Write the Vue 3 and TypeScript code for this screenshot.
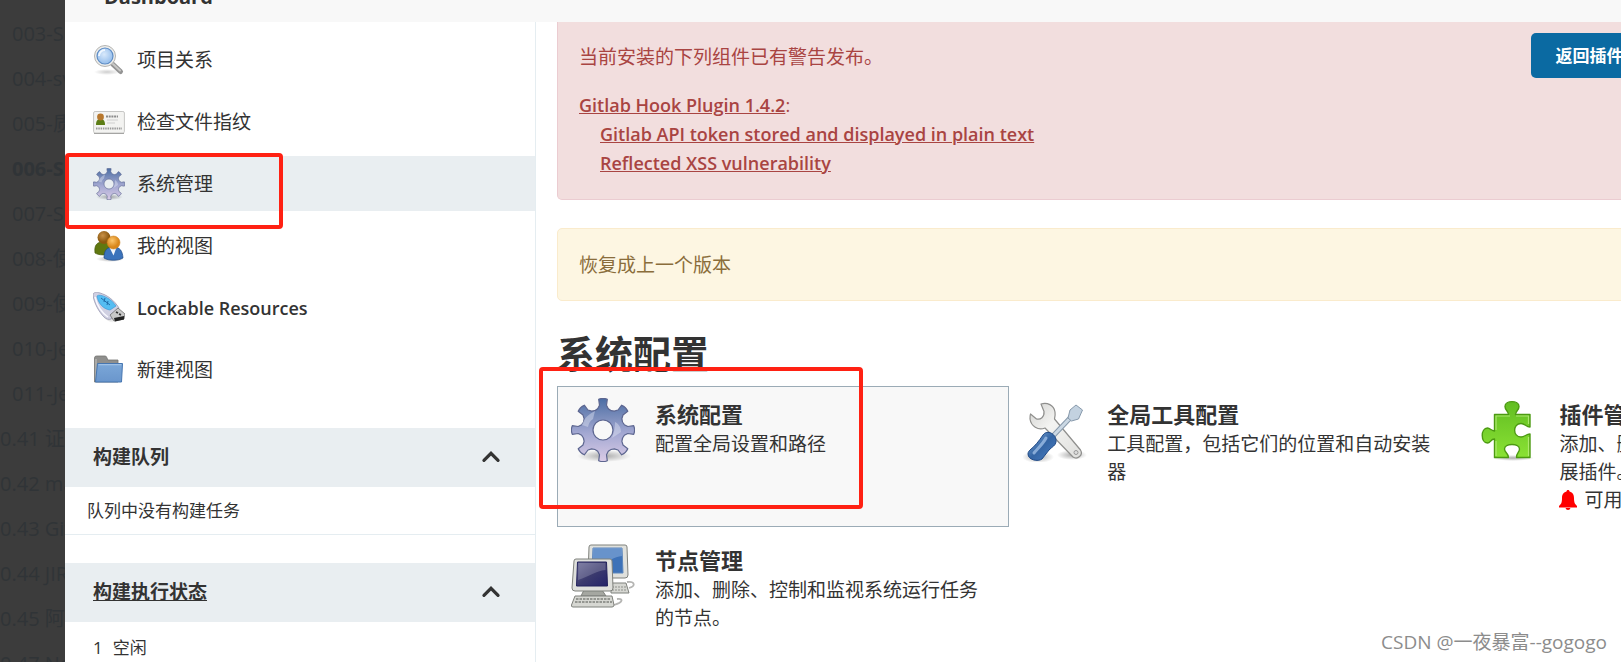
<script setup lang="ts">
interface NavItem {
  label: string
  icon: string
  latin?: boolean
  active?: boolean
}

interface Tool {
  title: string
  text: string
  icon: string
  active?: boolean
  notice?: string
}

const outline: { label: string; section?: boolean; current?: boolean }[] = [
  { label: '003-S' },
  { label: '004-sv' },
  { label: '005-质' },
  { label: '006-S', current: true },
  { label: '007-S' },
  { label: '008-使' },
  { label: '009-使' },
  { label: '010-Je' },
  { label: '011-Je' },
  { label: '0.41 证', section: true },
  { label: '0.42 ma', section: true },
  { label: '0.43 Git', section: true },
  { label: '0.44 JIR', section: true },
  { label: '0.45 阿', section: true },
  { label: '0.47 Ne', section: true },
]

const nav: NavItem[] = [
  { label: '项目关系', icon: 'search' },
  { label: '检查文件指纹', icon: 'card' },
  { label: '系统管理', icon: 'gear', active: true },
  { label: '我的视图', icon: 'people' },
  { label: 'Lockable Resources', icon: 'usb', latin: true },
  { label: '新建视图', icon: 'folder' },
]

const tools: Tool[] = [
  { title: '系统配置', text: '配置全局设置和路径', icon: 'gear', active: true },
  { title: '全局工具配置', text: '工具配置，包括它们的位置和自动安装器', icon: 'tools' },
  { title: '插件管理', text: '添加、删除、禁用或启用Jenkins功能扩展插件。', icon: 'puzzle', notice: '可用更新' },
  { title: '节点管理', text: '添加、删除、控制和监视系统运行任务的节点。', icon: 'computers' },
]

// Outline of an eight-toothed cog centred in a 64-unit box.
function cog(): string {
  const at = (radius: number, degrees: number) => {
    const a = (degrees * Math.PI) / 180
    return `${(32 + radius * Math.cos(a)).toFixed(1)} ${(32 + radius * Math.sin(a)).toFixed(1)}`
  }
  let d = ''
  for (let i = 0; i < 8; i++) {
    const c = i * 45
    d += `${i ? 'L' : 'M'}${at(22, c - 14)}L${at(25, c - 8)}L${at(31, c - 8)}Q${at(32.5, c)} ${at(31, c + 8)}L${at(25, c + 8)}L${at(22, c + 14)}Q${at(20.5, c + 22.5)} ${at(22, c + 31)}`
  }
  return d + 'Z'
}
const cogPath = cog()
</script>

<template>
  <svg class="defs" aria-hidden="true">
    <defs>
      <linearGradient id="g-cog" x1="0" y1="0" x2="0" y2="1">
        <stop offset="0" stop-color="#4a6da4" /><stop offset=".3" stop-color="#7b8dbb" />
        <stop offset=".55" stop-color="#a3a8d2" /><stop offset="1" stop-color="#dacbe6" />
      </linearGradient>
      <linearGradient id="g-green" x1="0" y1="0" x2="0" y2="1">
        <stop offset="0" stop-color="#62bd22" /><stop offset="1" stop-color="#8ae234" />
      </linearGradient>
      <linearGradient id="g-metal" x1="0" y1="0" x2="1" y2="1">
        <stop offset="0" stop-color="#d2d2d0" /><stop offset=".4" stop-color="#f4f4f2" /><stop offset="1" stop-color="#dededc" />
      </linearGradient>
      <linearGradient id="g-blue" x1="0" y1="0" x2="1" y2="1">
        <stop offset="0" stop-color="#86aedb" /><stop offset=".5" stop-color="#3465a4" /><stop offset="1" stop-color="#4a7fc4" />
      </linearGradient>
      <linearGradient id="g-screen" x1="0" y1="0" x2="1" y2="1">
        <stop offset="0" stop-color="#6f6f9a" /><stop offset=".5" stop-color="#3c3b6e" /><stop offset="1" stop-color="#25246a" />
      </linearGradient>
      <linearGradient id="g-folder" x1="0" y1="0" x2="0" y2="1">
        <stop offset="0" stop-color="#7ba7d8" /><stop offset="1" stop-color="#6a96cc" />
      </linearGradient>
      <radialGradient id="g-shadow">
        <stop offset="0" stop-color="#000" stop-opacity=".32" /><stop offset="1" stop-color="#000" stop-opacity="0" />
      </radialGradient>
      <radialGradient id="g-lens" cx=".45" cy=".4">
        <stop offset="0" stop-color="#d9e9fb" /><stop offset="1" stop-color="#9fc4ee" />
      </radialGradient>
      <radialGradient id="g-amber" cx=".4" cy=".35">
        <stop offset="0" stop-color="#fcc66c" /><stop offset="1" stop-color="#d9871b" />
      </radialGradient>
      <radialGradient id="g-brown" cx=".4" cy=".35">
        <stop offset="0" stop-color="#c99147" /><stop offset="1" stop-color="#8c5910" />
      </radialGradient>
    </defs>

    <symbol id="i-gear" viewBox="0 0 64 64">
      <ellipse cx="33" cy="58" rx="27" ry="6" fill="url(#g-shadow)" />
      <path fill-rule="evenodd" :d="cogPath + 'M42 32a10 10 0 1 0-20 0a10 10 0 1 0 20 0Z'" fill="url(#g-cog)" stroke="#5d6690" stroke-width="1.2" stroke-linejoin="round" />
      <path d="M11 27c2-7 7-11 13-14l-2 8c-3 2-4 4-5 8zM44 24c4 2 6 6 6 10l-9 6c2-5 3-10 3-16z" fill="#dde2f2" opacity=".45" />
    </symbol>

    <symbol id="i-search" viewBox="0 0 32 32">
      <ellipse cx="14" cy="28" rx="13" ry="3" fill="url(#g-shadow)" opacity=".6" />
      <path d="M19.5 20l8 7.500" stroke="#949494" stroke-width="5" stroke-linecap="round" />
      <path d="M20 20l7 6.500" stroke="#c8c8c6" stroke-width="2" stroke-linecap="round" />
      <circle cx="12" cy="12" r="10.500" fill="#ededeb" stroke="#b5b5b3" />
      <circle cx="12" cy="12" r="8" fill="url(#g-lens)" stroke="#5d8cc5" stroke-width="1.2" />
      <path d="M6 12a6 6 0 0 1 6-6" stroke="#eef6ff" stroke-width="2" fill="none" />
    </symbol>

    <symbol id="i-card" viewBox="0 0 32 32">
      <rect x=".6" y="5.500" width="30.800" height="21.500" rx="1.500" fill="#f3f3f1" stroke="#c6c6c4" />
      <path d="M1 27.500h30" stroke="#a5a5a3" />
      <path d="M3 19c0-5 2-6 4.500-6s4.500 1 4.500 6z" fill="#5c7d16" />
      <circle cx="7.500" cy="11" r="3.400" fill="#b8782e" />
      <path d="M13 10.500h12" stroke="#8c8c8c" stroke-width="1.800" stroke-dasharray="2 .7" />
      <path d="M14 14h11M14 17h8" stroke="#cfcfcf" stroke-width="1.200" />
      <path d="M3 22.500h26" stroke="#9b9b9b" stroke-width="2" stroke-dasharray="1.500 .8" />
    </symbol>

    <symbol id="i-people" viewBox="0 0 32 32">
      <ellipse cx="17" cy="29" rx="14" ry="3" fill="url(#g-shadow)" />
      <path d="M2 23c-1-8 2-11 8-11s8 3 8 11c-4 2.500-12 2.500-16 0z" fill="#607810" stroke="#45590a" stroke-width=".7" />
      <circle cx="11" cy="7.500" r="6.500" fill="url(#g-brown)" />
      <path d="M11 28c0-8 3-11 9.500-11s9 4 9.500 11c-5 3-14 3-19 0z" fill="#3b73bb" stroke="#204a87" stroke-width=".7" />
      <path d="M16.500 17.500h7l-3 8z" fill="#f4f7fb" />
      <circle cx="20.500" cy="12.500" r="6.500" fill="url(#g-amber)" stroke="#c77a14" stroke-width=".5" />
    </symbol>

    <symbol id="i-usb" viewBox="0 0 32 32">
      <path d="M8 22c4 6 9 9 16 9l4-3-6-6z" fill="url(#g-shadow)" opacity=".6" />
      <path d="M0 3c0-3 4-3 7-2 7 2 14 7 19 15l-8 11c-2 1-5 0-7-2C6 20 1 11 0 3z" fill="#d0d0e2" stroke="#a0a0b8" stroke-width=".9" />
      <path d="M2 5c2 8 7 16 13 20" fill="none" stroke="#f8f8ff" stroke-width="1.500" />
      <path d="M4 4c3-3 15 3 19 10l-6 4C10 17 5 11 4 4z" fill="#55bdf2" stroke="#3a9bd8" stroke-width=".7" />
      <path d="M8 6l9 7M12 6l-1 4M15 9l-1 4" stroke="#1f6ca8" />
      <path d="M17 23l8-7 7 6-1 5-10 2z" fill="#c9c9c9" stroke="#6e6e6e" stroke-width=".8" />
      <path d="M21 26l10-2v3.500l-9 2z" fill="#222" />
      <path d="M23 20l2 1M26 22l2 .8" stroke="#333" stroke-width="1.800" />
    </symbol>

    <symbol id="i-folder" viewBox="0 0 32 32">
      <path d="M1.500 28V4q0-2 2-2H12q1.500 0 2 2l.8 2H25v22z" fill="#8f8f8d" stroke="#747472" stroke-width=".8" />
      <path d="M3 26V5" stroke="#bcbcba" stroke-width="1.200" />
      <path d="M4.500 9.500h25l-1 18.500H2.500z" fill="url(#g-folder)" stroke="#4676b1" stroke-linejoin="round" />
      <path d="M5.500 10.700h22.800" stroke="#a8c7e8" />
    </symbol>

    <symbol id="i-tools" viewBox="0 0 64 64">
      <ellipse cx="15" cy="59" rx="16" ry="6" fill="url(#g-shadow)" />
      <ellipse cx="49" cy="57" rx="15" ry="5" fill="url(#g-shadow)" />
      <path d="M18 6c6-2 13 1 14 8 .5 3 0 5-.5 7l26 31c3 5-3 10-7.500 7L22 30C15 33 8 28 7 21c0-2 0-4 .5-5l6 5c4 1 8-2 7.500-7.500z" fill="url(#g-metal)" stroke="#8f8f8d" stroke-width="1.200" stroke-linejoin="round" />
      <circle cx="53" cy="54.500" r="2" fill="#ddd" stroke="#999" />
      <path d="M30 38L49 18" stroke="#8799ab" stroke-width="5" />
      <path d="M30 38L49 18" stroke="#cbd8e4" stroke-width="3" />
      <path d="M45 20l2-8 6-5 6.500 5-4 9-7 2z" fill="#c3d2e0" stroke="#8799ab" stroke-linejoin="round" />
      <path d="M20 37c4-6 14-1 13 7-1 4-3 4-7 8l-7 9c-4 3-14 1-14-5 0-2 1-3 2-4 5-4 9-9 13-15z" fill="url(#g-blue)" stroke="#204a87" />
      <path d="M23 40c-3 6-8 10-12 15" stroke="#a9c8ec" stroke-width="3" stroke-linecap="round" fill="none" opacity=".7" />
    </symbol>

    <symbol id="i-puzzle" viewBox="0 0 64 64">
      <ellipse cx="38" cy="60" rx="21" ry="3" fill="url(#g-shadow)" />
      <path d="M19.500 16.500H33.500c0-3.500-3.500-4-3.500-8 0-6.500 14-6.500 14 0 0 4-3.500 4.500-3.500 8H55V29c-4 0-5-3.500-9-3.500-8.500 0-8.500 13.500 0 13.500 4 0 5-3 9-3V59.500H41.500c0-5 3-5 3-8.500 0-6-15-6-15 0 0 3.500 4 4 4 8.500H19.500V41c-4 0-4 4-7 4-7 0-7-15 0-15 3 0 3 3 7 3z" fill="url(#g-green)" stroke="#4c9a12" stroke-width="1.400" stroke-linejoin="round" />
      <path d="M21 32V18h14M53.500 26v-8H41M21 58V43M53.500 39v19" fill="none" stroke="#b9ee7f" stroke-width="1.200" opacity=".8" />
    </symbol>

    <symbol id="i-computers" viewBox="0 0 64 64">
      <path d="M56 38c8-1 9 4 2 6M46 55c6-1 7 3-3 6" fill="none" stroke="#b5b5b3" stroke-width="1.800" />
      <path d="M40 39h15l3 10H40z" fill="#d6d7d2" stroke="#7f817c" />
      <path d="M41 43h14M41 46h15" stroke="#8f918c" stroke-dasharray="2 1" />
      <path d="M20 1h34q2 0 2 2l1 28q0 3-3 3H19q-2 0-2-2L18 3q0-2 2-2z" fill="#dfe0dc" stroke="#7f817c" />
      <path d="M22 4h29l1 25H21z" fill="#3d72b8" stroke="#5d87bd" />
      <path d="M22 4h29v8c-8 1-14 5-20 10l-9 1z" fill="#80a5d6" opacity=".65" />
      <path d="M13 46h18l4 6H10z" fill="#a5a7a1" stroke="#7f817c" />
      <path d="M5 15h34q2 0 2 2l1 27q0 3-3 3H4q-3 0-3-3l2-27q0-2 2-2z" fill="#dfe0dc" stroke="#7f817c" />
      <path d="M6.500 18h29l1 24h-31z" fill="url(#g-screen)" stroke="#23225c" />
      <path d="M7.500 19h27v7C25 27 17 33 7 36z" fill="#a3a3bd" opacity=".35" />
      <path d="M4 52h37l2 9q0 2-2 2H2q-2 0-1.500-2z" fill="#d6d7d2" stroke="#7f817c" />
      <path d="M5 55h35M4 58h37" stroke="#7f817c" stroke-width="1.300" stroke-dasharray="2.500 1" />
    </symbol>
  </svg>

  <div class="page">
    <div class="outline">
      <div v-for="o in outline" :key="o.label" class="outline-row" :class="{ section: o.section, current: o.current }">{{ o.label }}</div>
    </div>

    <div class="window">
      <header class="topbar"><a href="#" class="crumb">Dashboard</a></header>

      <div class="body">
        <aside class="side">
          <nav class="nav">
            <a v-for="n in nav" :key="n.label" href="#" class="nav-item" :class="{ active: n.active, latin: n.latin }">
              <svg class="icon-sm"><use :href="'#i-' + n.icon" /></svg>
              <span>{{ n.label }}</span>
              <i v-if="n.active" class="mark mark-nav"></i>
            </a>
          </nav>

          <section class="pane">
            <div class="pane-head">
              <span>构建队列</span>
              <button type="button" class="toggle" aria-label="收起构建队列">
                <svg viewBox="0 0 18 12"><path d="M2.500 9.500L9 3l6.500 6.500" /></svg>
              </button>
            </div>
            <p class="pane-row queue">队列中没有构建任务</p>
          </section>

          <section class="pane">
            <div class="pane-head">
              <a href="#">构建执行状态</a>
              <button type="button" class="toggle" aria-label="收起构建执行状态">
                <svg viewBox="0 0 18 12"><path d="M2.500 9.500L9 3l6.500 6.500" /></svg>
              </button>
            </div>
            <p class="pane-row executor"><span>1</span><span>空闲</span></p>
          </section>
        </aside>

        <main class="main">
          <div class="content">
            <section class="alert danger">
              <div class="alert-text">
                <p>当前安装的下列组件已有警告发布。</p>
                <dl>
                  <dt><a href="#">Gitlab Hook Plugin 1.4.2</a>:</dt>
                  <dd><a href="#">Gitlab API token stored and displayed in plain text</a></dd>
                  <dd><a href="#">Reflected XSS vulnerability</a></dd>
                </dl>
              </div>
              <div class="actions"><button type="button" class="primary">返回插件管理</button></div>
            </section>

            <section class="alert warning">恢复成上一个版本</section>

            <h1>系统配置</h1>
            <div class="cards">
              <a v-for="t in tools" :key="t.title" href="#" class="card" :class="{ active: t.active }">
                <svg class="icon-lg"><use :href="'#i-' + t.icon" /></svg>
                <span class="card-text">
                  <strong>{{ t.title }}</strong>
                  <span>{{ t.text }}</span>
                  <span v-if="t.notice" class="notice">
                    <svg viewBox="0 0 18 20"><path d="M9 0c1 0 1.500.7 1.500 1.500C14 2.500 15 5 15 8c0 5 1 6 3 8v1.500H0V16c2-2 3-3 3-8 0-3 1-5.500 4.500-6.500C7.500.700 8 0 9 0zM6.500 18h5q-.5 2-2.500 2t-2.500-2z" /></svg>{{ t.notice }}
                  </span>
                </span>
                <i v-if="t.active" class="mark mark-card"></i>
              </a>
            </div>
          </div>
        </main>
      </div>
    </div>

    <div class="watermark">CSDN @一夜暴富--gogogo</div>
  </div>
</template>

<style>
body {
  margin: 0;
  overflow: hidden;
}
</style>

<style scoped>
* {
  box-sizing: border-box;
}
.defs {
  position: absolute;
  width: 0;
  height: 0;
}
.page {
  position: relative;
  display: flex;
  height: 100vh;
  overflow: hidden;
  background: #3c3c3c;
  color: #333;
  font-family: "Open Sans", "Noto Sans CJK SC", sans-serif;
  font-size: 19px;
  line-height: 28px;
}
a {
  color: inherit;
}
p,
dl,
dd,
h1 {
  margin: 0;
}
.outline {
  flex: none;
  width: 65px;
  padding-top: 11px;
  overflow: hidden;
  color: #303437;
  font-size: 20px;
  line-height: 45px;
  white-space: nowrap;
}
.outline-row {
  padding-left: 12px;
}
.outline-row.section {
  padding-left: 0;
}
.outline-row.current {
  font-weight: 700;
}
.window {
  flex: 1;
  display: flex;
  flex-direction: column;
  min-width: 0;
  background: #fff;
}
.topbar {
  flex: none;
  display: flex;
  align-items: flex-end;
  height: 22px;
  padding: 0 39px 11px;
  background: #f8f8f8;
  overflow: hidden;
}
.crumb {
  font-size: 20px;
  font-weight: 700;
  text-decoration: none;
}
.body {
  flex: 1;
  display: flex;
  min-height: 0;
}
.side {
  flex: none;
  width: 471px;
  border-right: 1px solid #e5edf1;
}
.nav {
  display: grid;
  gap: 7px;
  padding: 10px 0 31px;
}
.nav-item {
  position: relative;
  display: flex;
  align-items: center;
  gap: 12px;
  height: 55px;
  padding-left: 28px;
  text-decoration: none;
}
.nav-item.latin {
  font-size: 18px;
  font-weight: 600;
}
.nav-item.active {
  padding-left: 24px;
  border-left: 4px solid #1383c9;
  background: #e9eef1;
}
.icon-sm {
  width: 32px;
  height: 32px;
}
.mark {
  position: absolute;
  z-index: 2;
  border: 4px solid #ff2113;
  border-radius: 4px;
  pointer-events: none;
}
.mark-nav {
  inset: -3px auto auto -4px;
  width: 218px;
  height: 76px;
}
.mark-card {
  inset: -20px auto auto -19px;
  width: 324px;
  height: 142px;
}
.pane {
  margin-bottom: 28px;
}
.pane-head {
  display: flex;
  align-items: center;
  justify-content: space-between;
  height: 59px;
  padding: 0 34px 2px 28px;
  background: #e9eef1;
  font-weight: 700;
}
.toggle {
  display: flex;
  padding: 0;
  border: 0;
  background: none;
}
.toggle svg {
  width: 20px;
  height: 13px;
  fill: none;
  stroke: #333;
  stroke-width: 3;
  stroke-linecap: round;
}
.pane-row {
  font-size: 17px;
  line-height: 47px;
}
.queue {
  padding-left: 22px;
  border-bottom: 1px solid #e5edf1;
}
.executor {
  display: flex;
  gap: 10px;
  padding: 2px 0 0 28px;
}
.main {
  flex: 1;
  min-width: 0;
  padding-left: 21px;
  overflow: hidden;
}
.content {
  width: 127.5%;
}
.alert {
  border: 1px solid;
  border-radius: 5px;
}
.danger {
  display: flex;
  margin-bottom: 28px;
  border-top: 0;
  border-top-left-radius: 0;
  border-color: #ebccd1;
  background: #f2dede;
  color: #a94442;
}
.alert-text {
  flex: 1;
  padding: 21px;
}
.alert-text p {
  margin-bottom: 20px;
}
.alert-text dl {
  font-size: 18px;
  line-height: 29px;
}
.alert-text a {
  font-weight: 600;
}
.alert-text dd {
  padding-left: 21px;
}
.actions {
  flex: 0 0 382px;
  padding-top: 11px;
}
.primary {
  height: 45px;
  padding: 0 25px;
  border: 0;
  border-radius: 5px;
  background: #0b6aa2;
  color: #fff;
  font: inherit;
  font-size: 17px;
  font-weight: 700;
}
.warning {
  padding: 22px 21px 21px;
  border-color: #faebcc;
  background: #fdf6e2;
  color: #8a6d3b;
}
h1 {
  margin-top: 29px;
  font-size: 38px;
  line-height: 46px;
}
.cards {
  display: grid;
  grid-template-columns: repeat(3, 1fr);
  gap: 5px 0;
  margin-top: 10px;
}
.card {
  position: relative;
  display: flex;
  gap: 20px;
  min-height: 141px;
  padding: 11px 13px;
  border: 1px solid transparent;
  text-decoration: none;
}
.card.active {
  border-color: #9babb6;
  background: #f8f8f8;
}
.icon-lg {
  flex: none;
  width: 64px;
  height: 64px;
}
.card-text {
  flex: 1;
  display: flex;
  flex-direction: column;
}
.card-text strong {
  font-size: 22px;
  line-height: 32px;
}
.notice {
  display: flex;
  align-items: center;
  gap: 7px;
}
.notice svg {
  width: 18px;
  height: 20px;
  fill: #f00;
}
.watermark {
  position: absolute;
  right: 14px;
  bottom: 6px;
  color: #8c8c8c;
  font-size: 19px;
}
</style>
